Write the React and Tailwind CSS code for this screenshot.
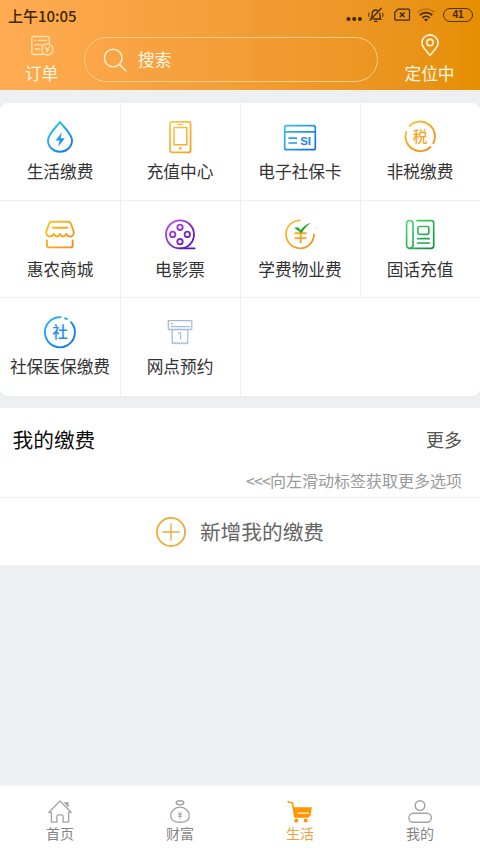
import React from "react";

const Gradient = ({ id, from, to }) => (
    <linearGradient id={id} x1="0" y1="0" x2="40" y2="40" gradientUnits="userSpaceOnUse">
        <stop offset="0.15" stopColor={from} />
        <stop offset="0.85" stopColor={to} />
    </linearGradient>
);

const Icon = ({ id, from, to, width = 1.7, children }) => (
    <svg
        className="w-10 h-10"
        viewBox="0 0 40 40"
        fill="none"
        stroke={`url(#${id})`}
        strokeWidth={width}
        strokeLinecap="round"
        strokeLinejoin="round"
    >
        <defs>
            <Gradient id={id} from={from} to={to} />
        </defs>
        {children}
    </svg>
);

const DropIcon = () => (
    <Icon id="drop" from="#35cdf5" to="#0a6cf5" width={1.9}>
        <path d="M20 5C17 9.5 8 16.5 8 23.6a12 11.2 0 0 0 24 0C32 16.5 23 9.5 20 5z" />
        <path d="M21.8 15.3L15.6 23.6h4l-1.3 6.2 6.4-8.6h-4.1z" fill="url(#drop)" stroke="none" />
    </Icon>
);

const PhoneIcon = () => (
    <Icon id="phone" from="#fbc94e" to="#f2a21c" width={1.8}>
        <rect x="10" y="4.8" width="20.6" height="30.5" rx="2" />
        <rect x="14" y="10.4" width="12.8" height="17.4" strokeWidth="1.5" />
        <path d="M18 7.5h4.6" strokeWidth="1.1" />
        <circle cx="20.3" cy="31.4" r="1.3" fill="url(#phone)" stroke="none" />
    </Icon>
);

const SocialCardIcon = () => (
    <Icon id="card" from="#36c3f5" to="#1268e8" width={1.7}>
        <rect x="4.7" y="8.7" width="30.6" height="24" rx="1.8" />
        <path d="M5 14.8h30" />
        <path d="M8.4 21.2h8.6M8.4 26h8.6" strokeLinecap="butt" />
        <text
            x="20.2"
            y="27.6"
            className="font-['Liberation_Sans',sans-serif] font-bold text-[11.5px]"
            fill="#2486ec"
            stroke="none"
        >
            SI
        </text>
    </Icon>
);

const TaxIcon = () => (
    <Icon id="tax" from="#fcbf35" to="#f08c12" width={1.9}>
        <path d="M9.6 8.9A14.85 14.85 0 0 1 33.3 26.2" />
        <path d="M30.4 30A14.7 14.7 0 0 1 6.2 14.8" />
        <text x="20" y="25.2" textAnchor="middle" className="font-medium text-[14.5px]" fill="#f5a623" stroke="none">
            税
        </text>
    </Icon>
);

const StoreIcon = () => (
    <Icon id="store" from="#fcc425" to="#f58a1a" width={1.9}>
        <path d="M11.5 6.8h17a2.6 2.6 0 0 1 2.4 1.8l2.7 7.6c.9 3-1 5.3-3.4 5.3-2 0-3.4-1-4-2.6-1 1.6-2 2.6-3.2 2.6s-2.3-1-3-2.6c-.8 1.6-1.8 2.6-3 2.6s-2.3-1-3.2-2.6c-.7 1.6-2 2.6-4 2.6-2.4 0-4.3-2.3-3.4-5.3l2.7-7.6a2.6 2.6 0 0 1 2.4-1.8z" />
        <path d="M12.8 12.7h14.6" />
        <path d="M6.9 25.4v5a2 2 0 0 0 2 2h21.8a2 2 0 0 0 2-2v-5" />
    </Icon>
);

const FilmIcon = () => (
    <Icon id="film" from="#c14cf0" to="#4a0dba" width={1.8}>
        <circle cx="20" cy="19.4" r="14" />
        <circle cx="20" cy="12.3" r="2.7" />
        <circle cx="12.7" cy="19.4" r="2.7" />
        <circle cx="27.3" cy="19.4" r="2.7" />
        <circle cx="20" cy="26.7" r="2.7" />
        <path d="M20 33.4L34.5 33.3" />
    </Icon>
);

const TuitionIcon = () => (
    <Icon id="tuition" from="#fcc233" to="#f58a20" width={1.8}>
        <path d="M19.8 5.3A14 14 0 1 0 34 19.5" />
        <path d="M14.5 18.3h12M14.5 23.1h12M20.7 17v11.2" strokeWidth="1.9" strokeLinecap="butt" />
        <path
            d="M14.2 12.8l3.6-.6 3 2.8c2.3-3.1 5.1-5.6 10.2-7.2-4.3 2.9-6.8 6.2-9.5 10.4z"
            fill="#1fae1b"
            stroke="none"
        />
    </Icon>
);

const LandlineIcon = () => (
    <Icon id="landline" from="#4ddc77" to="#128a3a" width={1.7}>
        <path d="M13 30.5V8.7a3.2 3.2 0 0 0-6.4 0v21.4a3.2 3.2 0 0 0 3.2 3.3h21.5a2.4 2.4 0 0 0 2.4-2.4V8a2.4 2.4 0 0 0-2.4-2.4H17" />
        <path d="M13 30.5a3.2 3.2 0 0 1-3.2 2.9" />
        <rect x="17.9" y="11.5" width="10.9" height="7.8" rx="1.5" />
        <path d="M17.6 23.7h11.5M17.6 28h11.5" />
    </Icon>
);

const SocialIcon = () => (
    <Icon id="social" from="#2ab4f8" to="#0f6df0" width={1.9}>
        <path d="M20.5 5.3A15 15 0 1 0 31 10.2" />
        <path d="M25.2 6.3l1.6.7" />
        <text x="20" y="26" textAnchor="middle" className="font-medium text-[15.5px]" fill="#1c8df5" stroke="none">
            社
        </text>
    </Icon>
);

const TicketIcon = () => (
    <Icon id="ticket" from="#9fb2d2" to="#a9c6ea" width={1.3}>
        <rect x="8.3" y="8.6" width="23.5" height="8.9" rx="0.8" />
        <path d="M11.2 14.7h18.2M11.2 11.6h1.3" />
        <path d="M12.2 18v13.6l2-1 2 1.3 2-1.3 2 1.3 2-1.3 2 1.3 2-1.3 1.6 1V18" />
        <path d="M18.5 20.8h2v6.3" />
    </Icon>
);

const services = [
    { name: "生活缴费", icon: DropIcon },
    { name: "充值中心", icon: PhoneIcon },
    { name: "电子社保卡", icon: SocialCardIcon },
    { name: "非税缴费", icon: TaxIcon },
    { name: "惠农商城", icon: StoreIcon },
    { name: "电影票", icon: FilmIcon },
    { name: "学费物业费", icon: TuitionIcon },
    { name: "固话充值", icon: LandlineIcon },
    { name: "社保医保缴费", icon: SocialIcon },
    { name: "网点预约", icon: TicketIcon },
    { name: "" },
];

const StatusBar = () => (
    <div className="flex flex-row items-center justify-between h-[30px] pl-2 pr-[7px] text-[#3d2806]">
        <span className="text-[15px] leading-none font-medium">上午10:05</span>
        <div className="flex flex-row items-center">
            <svg className="w-[18px] h-[22px]" viewBox="0 0 18 22" fill="currentColor">
                <circle cx="3.5" cy="15" r="2" />
                <circle cx="9.2" cy="15" r="2" />
                <circle cx="14.9" cy="15" r="2" />
            </svg>
            <svg
                className="w-[18px] h-[22px] ml-[4px]"
                viewBox="0 0 18 22"
                fill="none"
                stroke="currentColor"
                strokeWidth="1.3"
                strokeLinecap="round"
            >
                <path d="M4.2 14.5c1-1.4.9-3 1-4.7.2-2.3 1.6-3.8 3.5-3.8 1.3 0 2.3.5 2.9 1.5M12.7 9.5c.1 2 .1 3.8 1.1 5.5H6.5M7.5 17.3h2.6" />
                <path d="M3 16.2L14.3 4.3" />
                <path d="M2 9c-.7 1.1-.7 2.3 0 3.4M15.5 9c.7 1.1.7 2.3 0 3.4" strokeOpacity="0.7" />
            </svg>
            <svg
                className="w-[18px] h-[22px] ml-[8px]"
                viewBox="0 0 18 22"
                fill="none"
                stroke="currentColor"
                strokeWidth="1.2"
                strokeLinejoin="round"
            >
                <path d="M5 5.2h10.5a1 1 0 0 1 1 1v9a1 1 0 0 1-1 1H2.800a1 1 0 0 1-1-1V8.500z" />
                <path d="M6.9 8.4l4.6 4.6M11.5 8.400l-4.600 4.600" strokeWidth="1.4" />
            </svg>
            <svg
                className="w-[20px] h-[22px] ml-[5px]"
                viewBox="0 0 20 22"
                fill="none"
                stroke="currentColor"
                strokeWidth="1.7"
            >
                <path d="M1.5 8.7a12 12 0 0 1 17 0" strokeOpacity="0.25" />
                <path d="M3.8 11.1a8.8 8.8 0 0 1 12.4 0M6.4 13.8a5.2 5.2 0 0 1 7.2 0" />
                <path d="M8 15.6a3 3 0 0 1 4 0l-2 2z" fill="currentColor" stroke="none" />
            </svg>
            <div className="flex items-center justify-center w-[30px] h-[14px] ml-[7px] border border-[#4d3003] rounded-full font-['Liberation_Sans',sans-serif] font-bold text-[10px] leading-none">
                41
            </div>
        </div>
    </div>
);

const Header = () => (
    <div className="h-[90px] bg-linear-to-r from-[#ffab52] to-[#e68f00]">
        <StatusBar />
        <div className="flex flex-row h-[60px] text-[#fff6e0]">
            <div className="flex flex-col items-center w-[83px] pt-[4px]">
                <svg
                    className="w-[24px] h-[24px]"
                    viewBox="0 0 24 24"
                    fill="none"
                    stroke="#ffe6b8"
                    strokeWidth="1.3"
                    strokeLinecap="round"
                >
                    <path d="M12.5 20.5H3.3a1.5 1.5 0 0 1-1.5-1.5V4a1.5 1.5 0 0 1 1.5-1.5h14.5A1.5 1.5 0 0 1 19.3 4v5" />
                    <path d="M5 6.4h1M8.5 6.4h7.5M5 10.8h7M5 15h4.5" />
                    <circle cx="17.3" cy="15.5" r="5.6" />
                    <path d="M15.3 13l2 2.4 2-2.4M17.3 15.4v3.1M15.5 16h3.6" strokeWidth="1.1" />
                </svg>
                <span className="text-[16.7px] leading-[24px] mt-[3px]">订单</span>
            </div>
            <div className="flex flex-row items-center w-[294px] h-[45px] mt-[7px] ml-[1px] pl-[18px] border border-[#f9cd85] rounded-full">
                <svg className="w-[26px] h-[26px]" viewBox="0 0 26 26" fill="none" stroke="#fff0cf" strokeWidth="1.5">
                    <circle cx="10.2" cy="11" r="8.8" />
                    <path d="M16.5 17.5l6.8 6.8" />
                </svg>
                <span className="text-[16.7px] leading-none ml-[9px]">搜索</span>
            </div>
            <div className="flex flex-col items-center flex-1 pt-[4px] pl-[1px]">
                <svg className="w-[24px] h-[24px]" viewBox="0 0 24 24" fill="none" stroke="currentColor" strokeWidth="1.6">
                    <path
                        d="M12 21.2C9 17.5 3.9 13.3 3.9 9a8.1 8.1 0 0 1 16.2 0c0 4.3-5.1 8.5-8.1 12.2z"
                        strokeLinejoin="round"
                    />
                    <circle cx="12" cy="8.6" r="3.2" />
                </svg>
                <span className="text-[16.7px] leading-[24px] mt-[3px]">定位中</span>
            </div>
        </div>
    </div>
);

const Services = () => (
    <div className="grid grid-cols-4 grid-rows-3 h-[293px] mt-[13px] bg-white rounded-lg overflow-hidden">
        {services.map(({ name, icon: ServiceIcon }, index) => (
            <div
                key={name}
                className={`flex flex-col items-center pt-[14px] border-[#f0f0f2] ${
                    index % 4 > 0 ? "border-l pr-px" : ""
                } ${index < 8 ? "border-b" : ""}`}
            >
                {ServiceIcon && <ServiceIcon />}
                <span className="text-[16.7px] leading-[26px] text-[#333333] whitespace-nowrap mt-px">{name}</span>
            </div>
        ))}
    </div>
);

const Payments = () => (
    <div className="flex flex-col h-[157px] mt-3 bg-white">
        <div className="h-[90px] border-b border-[#f0f0f2] pl-[12.5px] pr-[18px]">
            <div className="flex flex-row items-center justify-between pt-[15px]">
                <span className="text-[20.7px] leading-[32px] text-[#0c0c0c]">我的缴费</span>
                <span className="text-[18px] leading-[32px] text-[#555555]">更多</span>
            </div>
            <div className="text-right text-[16px] leading-[24px] text-[#999999] mt-[13px]">
                <span className="tracking-[-0.9px]">&lt;&lt;&lt;</span>向左滑动标签获取更多选项
            </div>
        </div>
        <div className="flex flex-row items-center justify-center flex-1 pr-px">
            <svg className="w-[32px] h-[32px]" viewBox="0 0 32 32" fill="none" stroke="#f3a83a">
                <circle cx="16" cy="16" r="14.1" strokeWidth="1.8" />
                <path d="M16 7.3v17.4M7.3 16h17.4" strokeWidth="1.3" />
            </svg>
            <span className="text-[20.7px] leading-none text-[#666666] ml-[13px]">新增我的缴费</span>
        </div>
    </div>
);

const HomeTab = () => (
    <svg className="w-7 h-7" viewBox="0 0 28 28" fill="none" stroke="#a3a3a3" strokeWidth="1.3" strokeLinejoin="round">
        <path d="M14 4L2.9 15.3h2.5v9.9h5.5v-5.7a1.6 1.6 0 0 1 1.6-1.6h3a1.6 1.6 0 0 1 1.6 1.6v5.7h5.5v-9.9h2.5z" />
        <path d="M18.3 5.5h3.9v4.4z" fill="#a3a3a3" strokeWidth="0.8" />
    </svg>
);

const WealthTab = () => (
    <svg className="w-7 h-7" viewBox="0 0 28 28" fill="none" stroke="#a3a3a3" strokeWidth="1.3" strokeLinecap="round">
        <ellipse cx="14" cy="5.7" rx="3.8" ry="2" strokeWidth="1.5" />
        <path d="M10.8 10.7c2-.7 4.4-.7 6.4 0 3.2 1.5 6.1 4.6 6.1 8.3 0 4.3-3.7 6.3-9.3 6.3S4.7 23.3 4.7 19c0-3.7 2.9-6.8 6.1-8.3z" />
        <path d="M12.3 15l1.7 2.3 1.7-2.3M14 17.3v3.8M12.3 17.6h3.4M12.3 19.4h3.4" strokeWidth="0.9" />
    </svg>
);

const LifeTab = () => (
    <svg className="w-7 h-7" viewBox="0 0 28 28" fill="#ff9500">
        <path
            d="M2 4.8l4.5 1.1 2.3 14.2h13.4"
            fill="none"
            stroke="#ff9500"
            strokeWidth="1.5"
            strokeLinecap="round"
            strokeLinejoin="round"
        />
        <path d="M7 10.2h18.9l-1.3 8.2-1.8 1.6H8.4z" />
        <path d="M11.5 16.2h11.5" stroke="#fff" strokeWidth="1.1" />
        <circle cx="10.3" cy="23.6" r="2" />
        <circle cx="19.7" cy="23.6" r="2" />
    </svg>
);

const MineTab = () => (
    <svg className="w-7 h-7" viewBox="0 0 28 28" fill="none" stroke="#a3a3a3" strokeWidth="1.4">
        <circle cx="14" cy="8.6" r="4.9" />
        <rect x="2.9" y="16.3" width="22.4" height="9" rx="4.5" />
    </svg>
);

const tabs = [
    { name: "首页", icon: HomeTab },
    { name: "财富", icon: WealthTab },
    { name: "生活", icon: LifeTab, active: true },
    { name: "我的", icon: MineTab },
];

const TabBar = () => (
    <div className="grid grid-cols-4 h-[68px] mt-auto bg-white border-t border-[#f3f3f5]">
        {tabs.map(({ name, icon: TabIcon, active }) => (
            <div key={name} className="flex flex-col items-center pt-[11px]">
                <TabIcon />
                <span className={`text-[14px] leading-[16px] ${active ? "text-[#e8a33d]" : "text-[#858585]"}`}>
                    {name}
                </span>
            </div>
        ))}
    </div>
);

const App = () => {
    return (
        <div className="flex flex-col w-full h-screen overflow-hidden bg-[#eeeff1] font-['Noto_Sans_CJK_SC',sans-serif]">
            <Header />
            <Services />
            <Payments />
            <TabBar />
        </div>
    );
};

export default App;
